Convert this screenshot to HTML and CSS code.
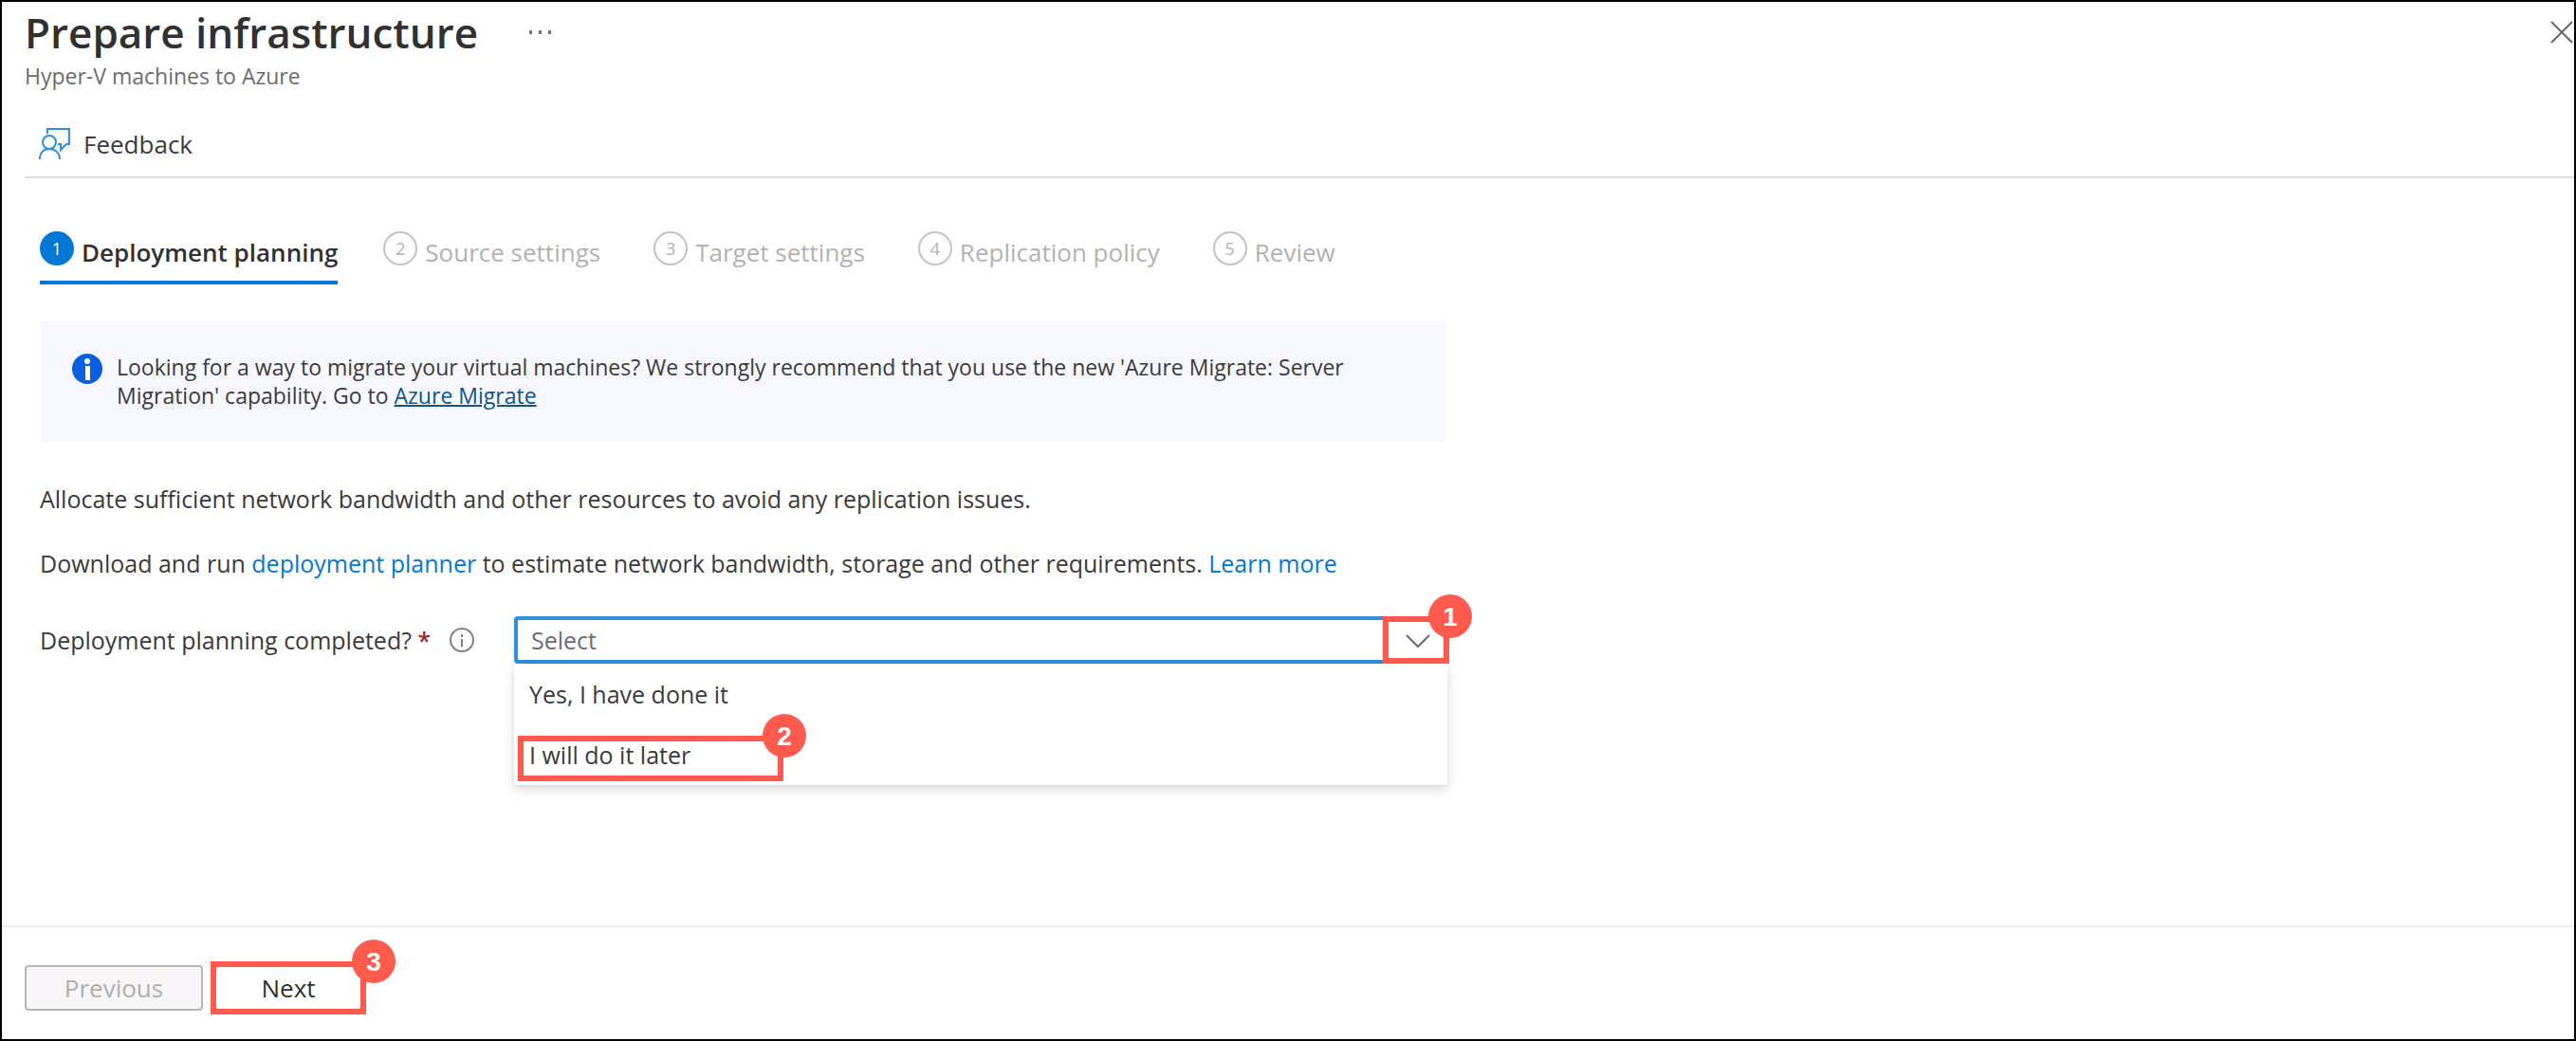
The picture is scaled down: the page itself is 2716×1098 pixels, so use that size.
FILE: index.html
```html
<!DOCTYPE html>
<html lang="en">
<head>
<meta charset="utf-8">
<meta name="viewport" content="width=device-width, initial-scale=1">
<title>Prepare infrastructure</title>
<link rel="stylesheet" href="styles.css">
</head>
<body>
<div class="blade">
  <header class="header">
    <div class="title-row">
      <h1 class="title">Prepare infrastructure</h1>
      <button class="icon-button" type="button" aria-label="More actions">
        <svg class="more-icon" viewBox="0 0 24 4" aria-hidden="true"><path d="M0 0h3v4H0zM10 0h3v4h-3zM20 0h3v4h-3z" fill="#767472"/></svg>
      </button>
      <button class="icon-button close" type="button" aria-label="Close">
        <svg class="close-icon" viewBox="0 0 26 26" aria-hidden="true"><path d="M2 2l22 22M24 2L2 24" stroke="#666" stroke-width="2" fill="none"/></svg>
      </button>
    </div>
    <p class="subtitle">Hyper-V machines to Azure</p>
  </header>

  <div class="toolbar">
    <button class="command" type="button">
      <svg class="feedback-icon" viewBox="0 0 36 36" aria-hidden="true">
        <g fill="none" stroke="#2a8fe0" stroke-width="2">
          <path d="M10 7V2h23v16h-3l-6 6v-6h-3"/>
          <circle cx="12" cy="16" r="7"/>
          <path d="M2 34c0-7 4-11 10-11s11 4 11 11"/>
        </g>
      </svg>
      Feedback
    </button>
  </div>

  <main class="content">
    <nav aria-label="Wizard steps">
      <ol class="steps">
        <li class="step step-current"><button class="step-button" type="button" aria-current="step"><span class="step-number">1</span><span class="step-label">Deployment planning</span></button></li>
        <li class="step"><button class="step-button" type="button" disabled><span class="step-number">2</span><span class="step-label">Source settings</span></button></li>
        <li class="step"><button class="step-button" type="button" disabled><span class="step-number">3</span><span class="step-label">Target settings</span></button></li>
        <li class="step"><button class="step-button" type="button" disabled><span class="step-number">4</span><span class="step-label">Replication policy</span></button></li>
        <li class="step"><button class="step-button" type="button" disabled><span class="step-number">5</span><span class="step-label">Review</span></button></li>
      </ol>
    </nav>

    <div class="banner">
      <svg class="banner-icon" viewBox="0 0 34 34" aria-hidden="true"><circle cx="17" cy="17" r="16" fill="#0a5fe0"/><circle cx="17" cy="9" r="3" fill="#fff"/><path d="M15 14h5v15h-5z" fill="#fff"/></svg>
      <p class="banner-text">Looking for a way to migrate your virtual machines? We strongly recommend that you use the new 'Azure Migrate: Server Migration' capability. Go to <a class="banner-link" href="#">Azure Migrate</a></p>
    </div>

    <p class="text">Allocate sufficient network bandwidth and other resources to avoid any replication issues.</p>
    <p class="text">Download and run <a class="link" href="#">deployment planner</a> to estimate network bandwidth, storage and other requirements. <a class="link" href="#">Learn more</a></p>

    <div class="field">
      <div class="field-label">
        <label for="planning">Deployment planning completed? <span class="required">*</span></label>
        <svg class="info-icon" viewBox="0 0 26 26" aria-hidden="true"><circle cx="13" cy="13" r="12" fill="none" stroke="#808080" stroke-width="2"/><path d="M12 7h2v3h-2zM12 12h2v8h-2z" fill="#808080"/></svg>
      </div>
      <div class="dropdown">
        <select class="select" id="planning"><option>Select</option></select>
        <svg class="chevron" viewBox="0 0 28 16" aria-hidden="true"><path d="M2 2l12 12L26 2" fill="none" stroke="#6a6a6a" stroke-width="2"/></svg>
        <div class="callout callout-arrow"><span class="badge">1</span></div>
        <ul class="menu" role="listbox" aria-label="Deployment planning completed?">
          <li class="menu-item" role="option">Yes, I have done it</li>
          <li class="menu-item" role="option">I will do it later<span class="callout callout-option"><span class="badge">2</span></span></li>
        </ul>
      </div>
    </div>
  </main>

  <footer class="footer">
    <button class="button" type="button" disabled>Previous</button>
    <div class="next">
      <button class="button button-next" type="button">Next</button>
      <div class="callout callout-next"><span class="badge">3</span></div>
    </div>
  </footer>
</div>
</body>
</html>
```
FILE: styles.css
```css
* {
  box-sizing: border-box;
}

body {
  margin: 0;
  background: #fff;
  color: #3b3a39;
  font-family: "Open Sans", "Noto Sans", sans-serif;
  font-size: 25px;
  line-height: 32px;
}

h1, p, ol, ul {
  margin: 0;
  padding: 0;
  list-style: none;
}

button {
  padding: 0;
  border: 0;
  background: none;
  color: inherit;
  font: inherit;
}

svg {
  display: block;
  flex: none;
}

.blade {
  display: flex;
  flex-direction: column;
  min-height: 100vh;
  border: 2px solid #000;
}

.header {
  padding: 8px 0 0 24px;
}

.title-row {
  display: flex;
  align-items: center;
  height: 48px;
}

.title {
  color: #323130;
  font-size: 44px;
  font-weight: 600;
  line-height: 46px;
}

.icon-button {
  display: grid;
  place-items: center;
  height: 48px;
  margin-left: 54px;
}

.close {
  margin-left: auto;
}

.more-icon {
  width: 24px;
  height: 4px;
}

.close-icon {
  width: 26px;
  height: 26px;
}

.subtitle {
  padding-top: 6px;
  color: #6e6c6a;
  font-size: 23px;
}

.toolbar {
  display: flex;
  align-items: center;
  height: 92px;
  margin-left: 24px;
  padding: 22px 14px 0;
  border-bottom: 2px solid #dedede;
}

.command {
  display: flex;
  align-items: center;
  gap: 12px;
  font-size: 26px;
}

.feedback-icon {
  width: 36px;
  height: 36px;
}

.content {
  flex: 1;
  width: 1524px;
  max-width: 100%;
  padding: 48px 0 0 40px;
}

.steps {
  display: flex;
  color: #b3b1af;
  font-size: 26px;
}

.step + .step {
  margin-left: 56px;
}

.step-current + .step {
  margin-left: 48px;
}

.step-button {
  display: flex;
  gap: 8px;
  height: 64px;
  padding-top: 8px;
}

.step-label {
  line-height: 44px;
}

.step-current .step-button {
  border-bottom: 4px solid #0078d4;
  color: #323130;
  font-weight: 600;
}

.step-number {
  width: 36px;
  height: 36px;
  border: 2px solid #c4c2c0;
  border-radius: 50%;
  font-size: 18px;
  line-height: 32px;
  font-weight: 400;
  text-align: center;
}

.step-current .step-number {
  border-color: #0078d4;
  background: #0078d4;
  color: #fff;
}

.banner {
  display: flex;
  gap: 14px;
  margin: 38px 0 44px;
  padding: 34px 104px 34px 33px;
  border-radius: 4px;
  background: #f6f7ff;
}

.banner-icon {
  width: 34px;
  height: 34px;
}

.banner-text {
  font-size: 23px;
  line-height: 30px;
}

.banner-link {
  color: #0f548c;
  text-decoration-thickness: 2px;
}

.text {
  margin-bottom: 36px;
}

.link {
  color: #0078d4;
  text-decoration: none;
}

.field {
  display: flex;
  align-items: flex-start;
  padding-top: 4px;
}

.field-label {
  display: flex;
  align-items: center;
  justify-content: space-between;
  width: 500px;
  height: 50px;
  padding-right: 42px;
}

.required {
  color: #a4262c;
  font-weight: 600;
}

.info-icon {
  width: 26px;
  height: 26px;
}

.dropdown {
  position: relative;
  flex: 1;
}

.select {
  display: block;
  width: 100%;
  height: 50px;
  padding: 0 14px;
  border: 4px solid #2f90df;
  border-radius: 4px;
  outline: 0;
  background: #fff;
  color: #6e6c6a;
  font: inherit;
  appearance: none;
}

.chevron {
  position: absolute;
  top: 18px;
  right: 17px;
  width: 28px;
  height: 16px;
}

.menu {
  height: 128px;
  border-radius: 4px;
  box-shadow: 0 6px 14px rgba(0, 0, 0, 0.12), 0 1px 4px rgba(0, 0, 0, 0.08);
}

.menu-item {
  position: relative;
  height: 64px;
  padding: 16px;
}

.callout {
  position: absolute;
  border: 6px solid #ff5a4c;
  pointer-events: none;
}

.callout-arrow {
  top: 0;
  right: -2px;
  width: 70px;
  height: 50px;
}

.callout-option {
  top: 12px;
  left: 4px;
  width: 280px;
  height: 48px;
}

.callout-next {
  inset: -4px;
}

.badge {
  position: absolute;
  top: -29px;
  right: -30px;
  width: 46px;
  height: 46px;
  border-radius: 50%;
  background: #ff5a4c;
  color: #fff;
  font-family: "Liberation Sans", Arial, sans-serif;
  font-size: 28px;
  font-weight: 700;
  line-height: 48px;
  text-align: center;
}

.callout-next .badge {
  right: -37px;
}

.footer {
  display: flex;
  gap: 12px;
  padding: 40px 24px 30px;
  border-top: 2px solid #efeaeb;
}

.button {
  width: 188px;
  height: 48px;
  border: 2px solid #8a8886;
  border-radius: 4px;
  background: #fff;
  color: #323130;
  font-size: 26px;
}

.button:disabled {
  border-color: #b8b5b2;
  background: #f8f5f8;
  color: #b0aeac;
}

.next {
  position: relative;
}

.button-next {
  display: block;
  width: 156px;
}
```
